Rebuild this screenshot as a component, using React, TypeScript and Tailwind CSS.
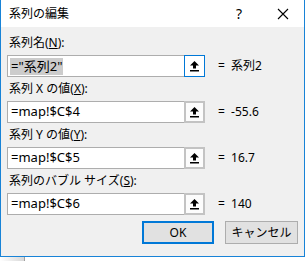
import React from 'react';

const font = { fontFamily: "'Noto Sans', 'Noto Sans CJK JP', sans-serif" };

const PickIcon: React.FC = () => (
  <svg width="11" height="12" viewBox="0 0 11 12">
    <path d="M5.5 1 L10 5.5 L7 5.5 L7 8.5 L4 8.5 L4 5.5 L1 5.5 Z" fill="#000" />
    <rect x="1" y="10" width="9" height="1.5" fill="#000" />
  </svg>
);

interface FieldProps {
  label: React.ReactNode;
  value: string;
  result: string;
  selected?: boolean;
}

const Field: React.FC<FieldProps> = ({ label, value, result, selected }) => (
  <div className="mb-[4px]">
    <div className="h-[16px] leading-[16px] text-[12px] text-black mb-[4px] pl-[2px]">{label}</div>
    <div className="flex items-center">
      <div className="flex h-[22px] w-[198px] border border-[#adadad] bg-white">
        <div className="flex-1 flex items-center pl-[2px] text-[13px] text-black">
          {selected ? (
            <span className="bg-[#cccccc] leading-[17px] px-[1px]">{value}</span>
          ) : (
            <span className="pl-[1px]">{value}</span>
          )}
        </div>
        {selected ? (
          <div className="w-[21px] -my-px -mr-px border border-[#0078d7] bg-white flex items-center justify-center">
            <PickIcon />
          </div>
        ) : (
          <div className="w-[21px] -my-px -mr-px bg-[#c3c3c3] p-[2px] flex">
            <div className="flex-1 bg-[#fcfcfc] flex items-center justify-center">
              <PickIcon />
            </div>
          </div>
        )}
      </div>
      <div className="ml-[13px] text-[12px] text-black whitespace-pre">{result}</div>
    </div>
  </div>
);

const App: React.FC = () => {
  return (
    <div className="w-[306px] h-[261px] bg-white overflow-hidden" style={font}>
      <div className="w-[305px] h-[257px] border-l border-r border-b border-[#1883d7] flex flex-col">
        <div className="h-[27px] bg-white flex items-center text-[12px] text-black">
          <span className="ml-[8px] flex-1">系列の編集</span>
          <span className="w-[14px] text-center text-[14px] mr-[31px]">?</span>
          <svg width="12" height="12" viewBox="0 0 12 12" className="mr-[15px]">
            <path d="M1 1 L11 11 M11 1 L1 11" stroke="#000" strokeWidth="1.1" />
          </svg>
        </div>
        <div className="flex-1 bg-[#f0f0f0] pt-[8px] pl-[6px] pr-[6px]">
          <Field
            label={<>系列名(<span className="underline">N</span>):</>}
            value={'="系列2"'}
            result="=  系列2"
            selected
          />
          <Field
            label={<>系列 X の値(<span className="underline">X</span>):</>}
            value="=map!$C$4"
            result="=  -55.6"
          />
          <Field
            label={<>系列 Y の値(<span className="underline">Y</span>):</>}
            value="=map!$C$5"
            result="=  16.7"
          />
          <Field
            label={<>系列のバブル サイズ(<span className="underline">S</span>):</>}
            value="=map!$C$6"
            result="=  140"
          />
          <div className="flex justify-end gap-[11px] mt-[6px]">
            <button className="w-[72px] h-[23px] border-2 border-[#0078d7] bg-[#e1e1e1] text-[12px] text-black">
              OK
            </button>
            <button className="w-[73px] h-[23px] border border-[#adadad] bg-[#e1e1e1] text-[12px] text-black">
              キャンセル
            </button>
          </div>
        </div>
      </div>
      <div className="flex h-[4px]">
        <div className="w-[24px] bg-gradient-to-r from-white to-[#d8d8d8]" />
        <div className="w-[1px] bg-[#a0a0a0]" />
        <div className="flex-1 bg-white" />
      </div>
    </div>
  );
};

export default App;
